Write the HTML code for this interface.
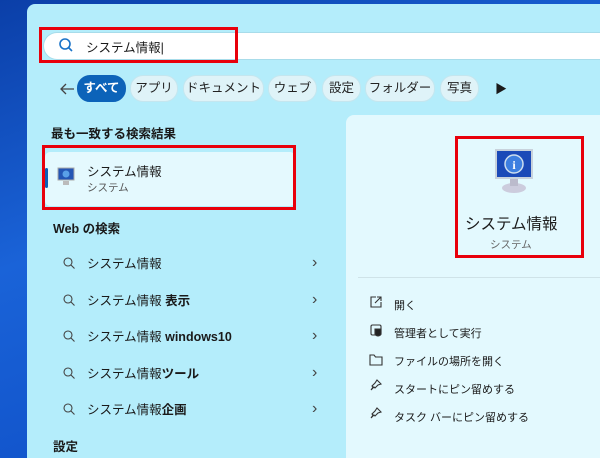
<!DOCTYPE html><html><head><meta charset="utf-8"><style>
*{margin:0;padding:0;box-sizing:border-box}
html,body{width:600px;height:458px;overflow:hidden}
body{position:relative;background:linear-gradient(160deg,#0b3fa8 0%,#1a63d8 40%,#0a47c0 100%);font-family:"Liberation Sans","Noto Sans CJK JP",sans-serif;color:#1a1a1a}
.panel{position:absolute;left:27px;top:4px;width:573px;height:454px;background:#b4edfb;border-radius:8px 0 0 0}
.abs{position:absolute}
.search{left:43px;top:32px;width:557px;height:28px;background:#fff;border-radius:14px 0 0 14px;border:1px solid #a8dcea;border-right:none}
.red{position:absolute;border:3px solid #e8000b}
.chip{position:absolute;top:75px;height:27px;border-radius:13px;background:#dff3f8;border:1px solid #c4e6ef;font-size:12.5px;line-height:25px;text-align:center;color:#222;white-space:nowrap}
.right{left:346px;top:115px;width:254px;height:343px;background:#e3f9fe;border-radius:8px 0 0 0}
.t{position:absolute;font-size:12.5px;white-space:nowrap}
.chev{position:absolute;left:312px;font-size:16px;color:#444}
</style></head><body>
<div class="panel"></div>
<div class="abs search"></div>
<svg class="abs" style="left:58px;top:37px" width="16" height="16"><circle cx="7" cy="7" r="5" fill="none" stroke="#1a73c8" stroke-width="1.6"/><line x1="10.5" y1="10.5" x2="14" y2="14" stroke="#1a73c8" stroke-width="1.6"/></svg>
<div class="t" style="left:86px;top:37px;font-size:12.5px">システム情報|</div>
<div class="red" style="left:39px;top:27px;width:199px;height:36px"></div>
<svg class="abs" style="left:58px;top:81px" width="18" height="16"><path d="M16 8H3M8 3L3 8l5 5" fill="none" stroke="#444" stroke-width="1.3"/></svg>
<div class="chip" style="left:77px;width:49px;background:#0c63b9;border-color:#0c63b9;color:#fff;font-weight:bold">すべて</div>
<div class="chip" style="left:130px;width:48px">アプリ</div>
<div class="chip" style="left:183px;width:81px">ドキュメント</div>
<div class="chip" style="left:268px;width:49px">ウェブ</div>
<div class="chip" style="left:322px;width:39px">設定</div>
<div class="chip" style="left:365px;width:70px">フォルダー</div>
<div class="chip" style="left:440px;width:39px">写真</div>
<div class="t" style="left:495px;top:80px;font-size:12px">▶</div>
<div class="t" style="left:51px;top:123px;font-weight:bold;font-size:12.5px">最も一致する検索結果</div>
<div class="abs" style="left:45px;top:152px;width:250px;height:54px;background:#e4f9fe;border-radius:5px"></div>
<div class="abs" style="left:45px;top:168px;width:3px;height:20px;background:#0c5fb5;border-radius:2px"></div>
<svg class="abs" style="left:55px;top:166px" width="22" height="22"><rect x="3" y="2" width="16" height="12" fill="#2456b5" stroke="#aaa"/><circle cx="11" cy="8" r="3.5" fill="#5aa0e8"/><rect x="8" y="15" width="6" height="4" fill="#bbb"/></svg>
<div class="t" style="left:87px;top:161px;font-size:12.5px">システム情報</div>
<div class="t" style="left:87px;top:180px;font-size:10.5px;color:#555">システム</div>
<div class="red" style="left:42px;top:145px;width:254px;height:65px"></div>
<div class="t" style="left:53px;top:218px;font-weight:bold">Web の検索</div>
<div class="abs right"></div>
<svg class="abs" style="left:492px;top:146px" width="44" height="50"><rect x="4" y="4" width="36" height="28" fill="#1b4ab8" stroke="#c8d2dc" stroke-width="2"/><circle cx="22" cy="18" r="9" fill="#3e7fe0" stroke="#cde" stroke-width="1.5"/><text x="22" y="23" font-size="12" font-family="Liberation Serif" fill="#fff" text-anchor="middle" font-weight="bold">i</text><ellipse cx="22" cy="42" rx="12" ry="5" fill="#ccd"/><rect x="18" y="33" width="8" height="7" fill="#bbc"/></svg>
<div class="t" style="left:465px;top:212px;font-size:15.5px">システム情報</div>
<div class="t" style="left:490px;top:237px;font-size:10.5px;color:#666">システム</div>
<div class="red" style="left:455px;top:136px;width:129px;height:122px"></div>
<div class="abs" style="left:358px;top:277px;width:242px;height:1px;background:#cfe3e8"></div>
<div class="t" style="left:394px;top:297px;font-size:11px">開く</div>
<div class="t" style="left:394px;top:325px;font-size:11px">管理者として実行</div>
<div class="t" style="left:394px;top:353px;font-size:11px">ファイルの場所を開く</div>
<div class="t" style="left:394px;top:381px;font-size:11px">スタートにピン留めする</div>
<div class="t" style="left:394px;top:409px;font-size:11px">タスク バーにピン留めする</div>
<svg class="abs" style="left:368px;top:295px" width="16" height="140" fill="none" stroke="#333" stroke-width="1.1"><path d="M8 2H3v10h10V7M9 2h4v4M13 2L7 8"/><rect x="3" y="30" width="10" height="10" rx="1.5"/><path d="M7 34h6v5c0 1-2 2-3 2s-3-1-3-2z" fill="#222"/><path d="M2 60h4l1.5 2H14v8H2z"/><path d="M9 85l4 4-3 1-3 3-1-1-3 3 2-3-1-1 3-3z"/><path d="M9 113l4 4-3 1-3 3-1-1-3 3 2-3-1-1 3-3z"/></svg>
<svg class="abs" style="left:62px;top:256px" width="14" height="170" fill="none" stroke="#444" stroke-width="1.1"><g><circle cx="6" cy="6" r="4"/><path d="M9 9l3.5 3.5"/></g><g transform="translate(0,37)"><circle cx="6" cy="6" r="4"/><path d="M9 9l3.5 3.5"/></g><g transform="translate(0,73)"><circle cx="6" cy="6" r="4"/><path d="M9 9l3.5 3.5"/></g><g transform="translate(0,110)"><circle cx="6" cy="6" r="4"/><path d="M9 9l3.5 3.5"/></g><g transform="translate(0,146)"><circle cx="6" cy="6" r="4"/><path d="M9 9l3.5 3.5"/></g></svg>
<div class="t" style="left:87px;top:253px">システム情報</div>
<div class="t" style="left:87px;top:290px">システム情報 <b>表示</b></div>
<div class="t" style="left:87px;top:326px">システム情報 <b>windows10</b></div>
<div class="t" style="left:87px;top:363px">システム情報<b>ツール</b></div>
<div class="t" style="left:87px;top:399px">システム情報<b>企画</b></div>
<div class="chev" style="top:254px">›</div><div class="chev" style="top:291px">›</div><div class="chev" style="top:327px">›</div><div class="chev" style="top:364px">›</div><div class="chev" style="top:400px">›</div>
<div class="t" style="left:53px;top:436px;font-weight:bold">設定</div>
</body></html>
